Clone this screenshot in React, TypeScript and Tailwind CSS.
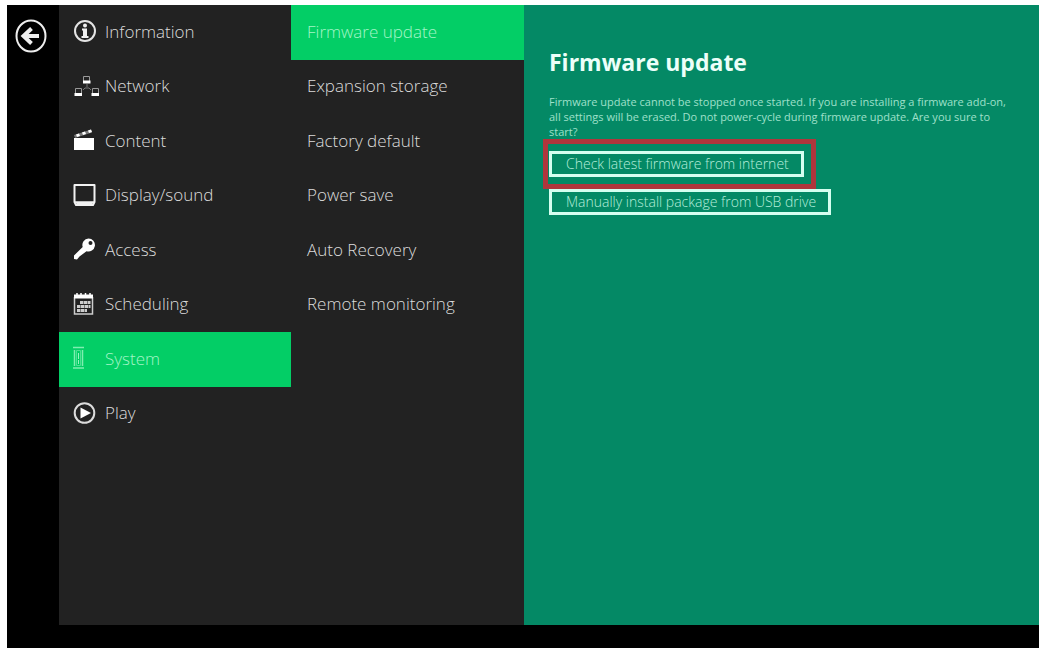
import React from 'react';

const menu = [
  { label: 'Information', icon: <InfoIcon /> },
  { label: 'Network', icon: <NetworkIcon /> },
  { label: 'Content', icon: <ContentIcon /> },
  { label: 'Display/sound', icon: <DisplayIcon /> },
  { label: 'Access', icon: <KeyIcon /> },
  { label: 'Scheduling', icon: <CalendarIcon /> },
  { label: 'System', icon: <SystemIcon /> },
  { label: 'Play', icon: <PlayIcon /> },
];

const systemPages = [
  'Firmware update',
  'Expansion storage',
  'Factory default',
  'Power save',
  'Auto Recovery',
  'Remote monitoring',
];

export default function App() {
  const [section, setSection] = React.useState('System');
  const [page, setPage] = React.useState('Firmware update');

  return (
    <div className="flex min-h-screen bg-white pt-[5px] pr-[3px] pl-[7px] font-['Open_Sans',sans-serif] text-[#dcdcdc]">
      <div className="flex flex-1 bg-black pb-[23px]">
        <div className="w-[52px] shrink-0 pt-[14px] pl-2">
          <button aria-label="Back" className="block">
            <BackIcon />
          </button>
        </div>

        <nav className="w-[232px] shrink-0 bg-[#222222]">
          <ul className="grid h-[436px] grid-rows-8">
            {menu.map((item) => (
              <li key={item.label}>
                <button
                  onClick={() => setSection(item.label)}
                  className={`flex h-full w-full items-center pb-[2px] pl-[14px] text-left text-[17px] font-light ${
                    section === item.label ? 'bg-[#03ce66] text-[#a4f5c6]' : ''
                  }`}
                >
                  <span className="w-8 shrink-0">{item.icon}</span>
                  {item.label}
                </button>
              </li>
            ))}
          </ul>
        </nav>

        <nav className="w-[233px] shrink-0 bg-[#222222]">
          <ul className="grid h-[327px] grid-rows-6">
            {systemPages.map((name) => (
              <li key={name}>
                <button
                  onClick={() => setPage(name)}
                  className={`flex h-full w-full items-center pb-[2px] pl-4 text-left text-[17px] font-light ${
                    page === name ? 'bg-[#03ce66] text-[#a4f5c6]' : ''
                  }`}
                >
                  {name}
                </button>
              </li>
            ))}
          </ul>
        </nav>

        <main className="flex-1 bg-[#048965] pt-[41px] pr-6 pl-[25px]">
          <h1 className="text-[23px] leading-8 font-bold text-[#ecfff9]">Firmware update</h1>
          <p className="mt-4 text-[11px] leading-[15px] text-[#9fe0ca]">
            Firmware update cannot be stopped once started. If you are installing a firmware add-on, all
            settings will be erased. Do not power-cycle during firmware update. Are you sure to start?
          </p>
          <div className="mt-3 flex flex-col items-start gap-3">
            <div className="relative">
              <button className="h-[26px] border-[3px] border-[#d5fff0] pr-3 pl-[14px] text-[14px] leading-5 font-light text-[#b5eedb]">
                Check latest firmware from internet
              </button>
              <div className="pointer-events-none absolute -top-3 -right-3 -bottom-3 -left-[6px] border-[5px] border-[#b0363c]" />
            </div>
            <button className="h-[26px] border-[3px] border-[#d5fff0] pr-3 pl-[14px] text-[14px] leading-5 font-light text-[#b5eedb]">
              Manually install package from USB drive
            </button>
          </div>
        </main>
      </div>
    </div>
  );
}

function BackIcon() {
  return (
    <svg width="32" height="34" viewBox="0 0 32 34" fill="none" stroke="#eeeeee">
      <ellipse cx="16" cy="17" rx="14.5" ry="15.5" strokeWidth="2" />
      <path d="M24 17H9M16.5 9.5L8.5 17l8 7.5" strokeWidth="4" />
    </svg>
  );
}

function InfoIcon() {
  return (
    <svg width="24" height="24" viewBox="0 0 24 24" fill="#f0f0f0">
      <circle cx="12" cy="12" r="10" fill="none" stroke="#e4e4e4" strokeWidth="2" />
      <circle cx="12" cy="6.5" r="2" />
      <path d="M9 9.5h5V17h1.5v2h-7v-2H10v-5.5H9z" />
    </svg>
  );
}

function NetworkIcon() {
  return (
    <svg width="28" height="24" viewBox="0 0 28 24" fill="none" stroke="#999999">
      <path d="M10.5 2.5h6v5h-6zM2.5 14.5h6v5h-6zM19.500 14.5h6v5h-6z" />
      <path d="M10 8h7.500M1.500 20.500h7.500M18.500 20.500h7.500" stroke="#ffffff" strokeWidth="3" />
      <path d="M10 16l2-2h4l2 2M14 10v3" stroke="#777777" />
    </svg>
  );
}

function ContentIcon() {
  return (
    <svg width="22" height="24" viewBox="0 0 22 24" fill="#ffffff">
      <path d="M1 10h20v12H1z" />
      <path d="M1 7L18 1.500l1 3L2 10z" fill="#777777" />
      <path d="M3 6.500l3-1 1 2.500-3 1zM9 4.500l3-1 1 2.500-3 1zM15 2.500l3-1 1 2.500-3 1z" />
    </svg>
  );
}

function DisplayIcon() {
  return (
    <svg width="24" height="24" viewBox="0 0 24 24" fill="none" stroke="#f2f2f2">
      <path d="M1.500 2h20v17l-1.500 3H3l-1.500-3z" strokeWidth="2" strokeLinejoin="round" />
      <path d="M2 19.500h19M4 21.500h15" strokeWidth="2.500" />
    </svg>
  );
}

function KeyIcon() {
  return (
    <svg width="24" height="24" viewBox="0 0 24 24">
      <path
        d="M15.500 1.500a6.500 6.500 0 1 1-2 12.700L6.500 19.500 4 22.500 1 22v-3.500L9.700 10A6.500 6.500 0 0 1 15.500 1.500z"
        fill="#ffffff"
      />
      <circle cx="17.500" cy="6" r="2" fill="#222222" />
    </svg>
  );
}

function CalendarIcon() {
  return (
    <svg width="22" height="24" viewBox="0 0 22 24" fill="none" stroke="#cccccc">
      <path d="M1.500 5v17h18V5" strokeWidth="1.500" />
      <path d="M1 4.500h19" stroke="#ffffff" strokeWidth="4" />
      <path d="M4 1v3M8 1v3M12.500 1v3M17 1v3" stroke="#ffffff" strokeWidth="1.500" />
      <path d="M7 10.500h10.500M4 14.500h13.500M4 18.500h10" strokeWidth="3" strokeDasharray="3.500 0.500" />
    </svg>
  );
}

function SystemIcon() {
  return (
    <svg width="12" height="24" viewBox="0 0 12 24" fill="none" stroke="#7eeeb0">
      <path d="M0 1.500h11M1.500 4v16M9.500 4v16M0 22h11" strokeWidth="1.500" />
      <path d="M3.500 4.500h4v15h-4z" stroke="#4be292" />
      <path d="M5.500 7v11" stroke="#9af5c0" strokeDasharray="6 1" />
    </svg>
  );
}

function PlayIcon() {
  return (
    <svg width="24" height="24" viewBox="0 0 24 24">
      <circle cx="11.500" cy="12" r="9.800" fill="none" stroke="#dcdcdc" strokeWidth="2" />
      <path d="M7.500 6.500L18 12 7.500 17.500z" fill="#ffffff" />
    </svg>
  );
}
